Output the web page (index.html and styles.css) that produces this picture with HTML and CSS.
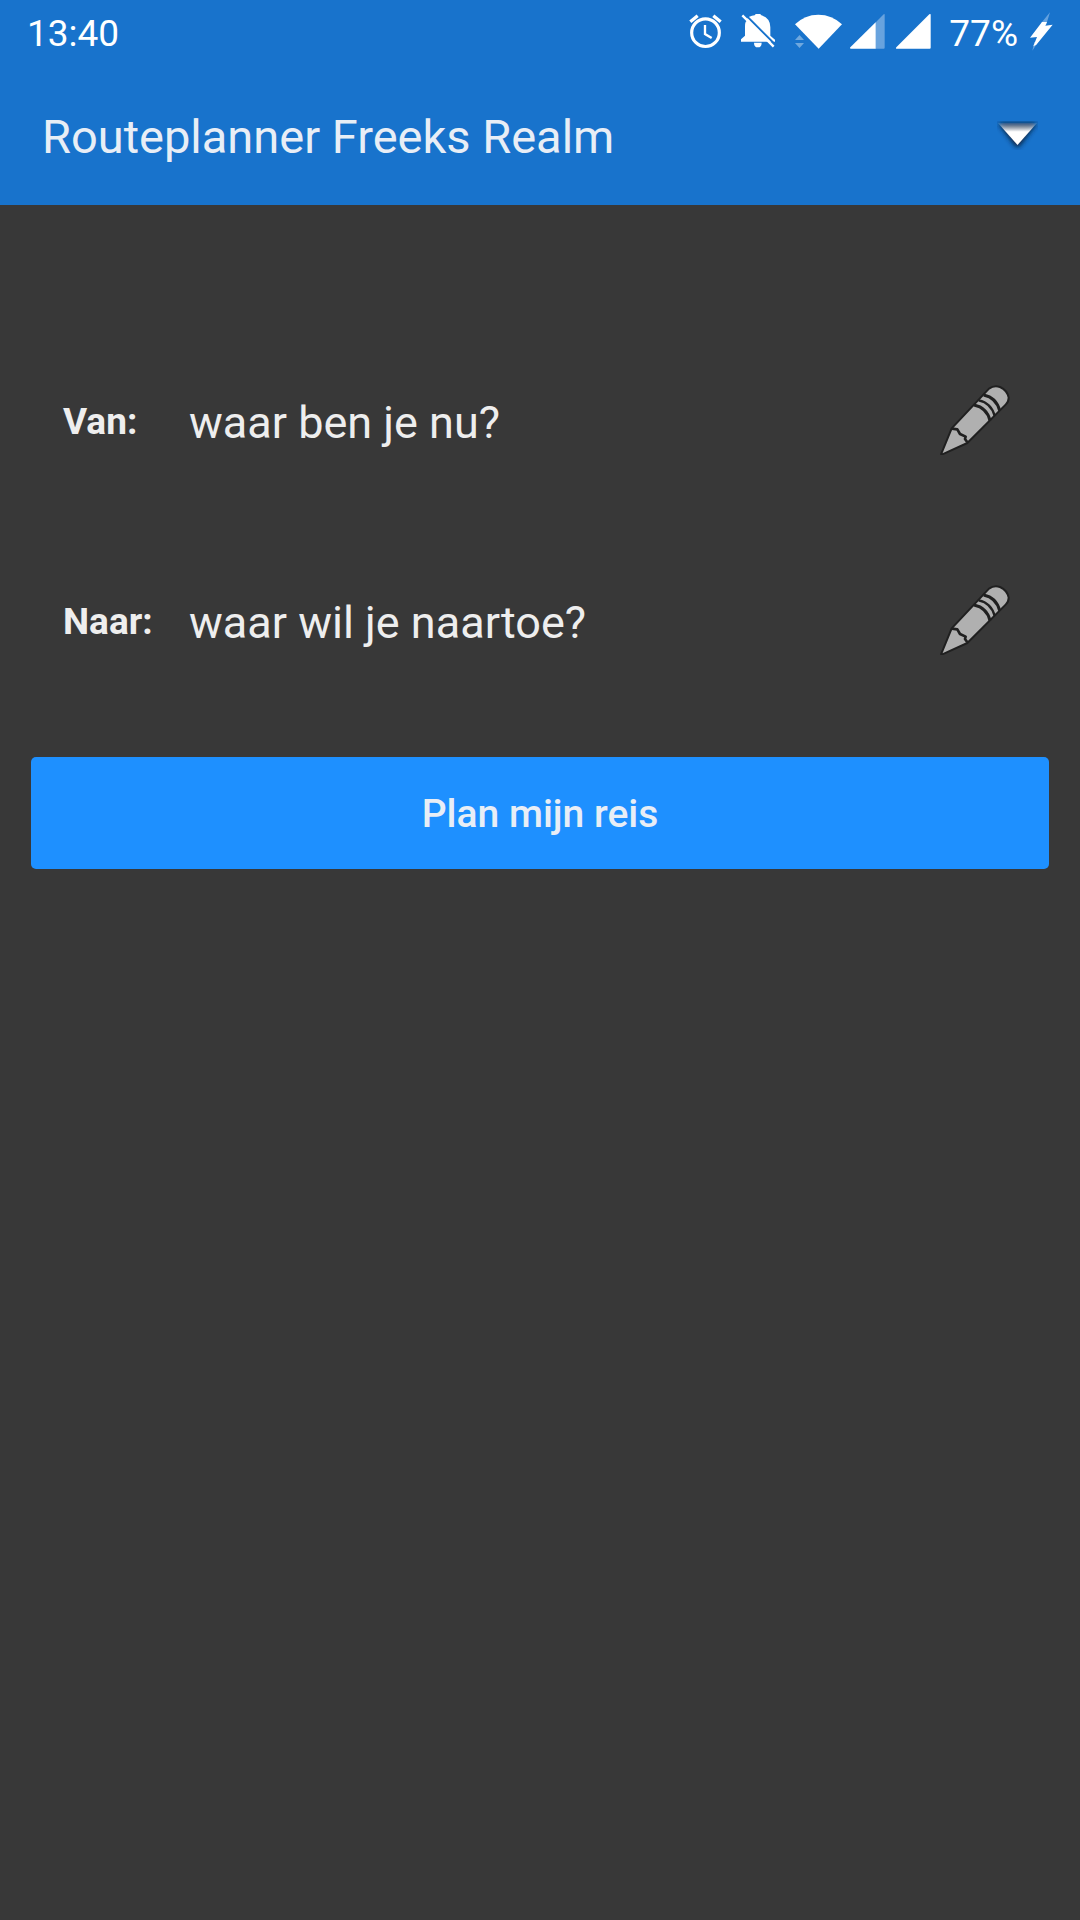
FILE: index.html
```html
<!DOCTYPE html>
<html lang="nl">
<head>
<meta charset="utf-8">
<meta name="viewport" content="width=device-width, initial-scale=1">
<title>Routeplanner Freeks Realm</title>
<link rel="stylesheet" href="styles.css">
</head>
<body>
<header class="top">
  <div class="status">
    <time class="clock">13:40</time>
    <div class="indicators">
      <svg width="33" height="35" viewBox="57 42 99 105" fill="none" stroke="#fff" aria-hidden="true">
        <circle cx="106.500" cy="98" r="41.500" stroke-width="9.500"/>
        <path d="M105 75V102L125 114" stroke-width="7"/>
        <path d="M61 65L83 47M130 47L152 65" stroke-width="10"/>
      </svg>
      <svg width="36" height="35" viewBox="210 42 108 105" aria-hidden="true">
        <path fill="#fff" d="M213 125V118L225 107V80Q225 60 236 51Q247 46 254 46Q256 41 264 41Q272 41 274 46Q301 54 301 82V107L315 119V125zM252 128H275Q275 142 263.500 142Q252 142 252 128z"/>
        <path d="M226 44L322 140" stroke="#1873cc" stroke-width="6"/>
        <path d="M215 54L228 67L232 50z" fill="#1873cc"/>
        <path d="M217 46L311 140" stroke="#fff" stroke-width="7"/>
      </svg>
      <div class="signals">
        <svg width="49" height="35" viewBox="372 42 147 105" aria-hidden="true">
          <path fill="#fff" d="M375 73Q404 44 445 44Q486 44 516 73L446 146z"/>
          <path fill="#6fa8de" d="M375 120L388.500 105L402 120zM375 129H402L388.500 144z"/>
        </svg>
        <svg width="35" height="35" viewBox="27 42 105 105" aria-hidden="true">
          <path fill="#68a3de" d="M103 68L128 43Q131 41 131 45V143Q131 146 128 146H103z"/>
          <path fill="#fff" d="M104 67V146H30Q25 146 28 142z"/>
        </svg>
        <svg width="39" height="35" viewBox="153 42 117 105" aria-hidden="true">
          <path fill="#fff" d="M265 43Q269 40 269 45V143Q269 146 266 146H168Q163 146 166 142z"/>
        </svg>
      </div>
      <div class="battery">
        <span class="percent">77%</span>
        <svg width="23" height="39" viewBox="570 36 69 117" aria-hidden="true">
          <path fill="#65a2df" d="M630 37L618 76L602 73L606 66zM577 152L583 126H594z"/>
          <path fill="#fff" d="M606 66H621L616 77L638 74L589 134L580 139L591 111L570 113z"/>
        </svg>
      </div>
    </div>
  </div>
  <div class="titlebar">
    <h1 class="title">Routeplanner Freeks Realm</h1>
    <button class="menu" type="button" aria-label="Menu">
      <svg width="41" height="29" viewBox="0 0 41 29" aria-hidden="true">
        <defs>
          <linearGradient id="shine" x1="0" y1="0" x2="0" y2="1">
            <stop offset="0" stop-color="#fff" stop-opacity=".1"/>
            <stop offset=".4" stop-color="#fff"/>
          </linearGradient>
          <filter id="shade" x="-20%" y="-20%" width="140%" height="150%">
            <feGaussianBlur stdDeviation="2.500"/>
          </filter>
        </defs>
        <path d="M1 2H40L22 26H19z" fill="#0a2340" filter="url(#shade)"/>
        <path d="M1 2H40L20.500 24z" fill="url(#shine)"/>
      </svg>
    </button>
  </div>
</header>

<main>
  <form class="planner">
    <div class="row">
      <label class="label" for="van">Van:</label>
      <input class="place" id="van" type="text" placeholder="waar ben je nu?">
      <button class="edit" type="button" aria-label="Van wijzigen">
        <svg width="70" height="70" viewBox="60 45 210 210" aria-hidden="true">
          <g id="pencil" stroke="#202020" stroke-linejoin="round">
            <path fill="#b0b0b0" stroke-width="6" d="M64 251L95 175L188 76L207 56Q223 44 240 51Q262 61 266 83Q266 95 257 104L142 219L67 253Q62 254 64 251z"/>
            <g fill="none" stroke-width="9">
              <path d="M162 105Q201 113 210 152"/>
              <path d="M176 91Q214 99 224 138" stroke-width="7"/>
              <path d="M191 75Q229 83 239 122"/>
              <path d="M96 176L112 178L120 192L137 200L135 207L142 217" stroke-width="8"/>
            </g>
          </g>
        </svg>
      </button>
    </div>
    <div class="row">
      <label class="label" for="naar">Naar:</label>
      <input class="place" id="naar" type="text" placeholder="waar wil je naartoe?">
      <button class="edit" type="button" aria-label="Naar wijzigen">
        <svg width="70" height="70" viewBox="60 45 210 210" aria-hidden="true"><use href="#pencil"/></svg>
      </button>
    </div>
    <button class="submit" type="submit">Plan mijn reis</button>
  </form>
</main>
</body>
</html>
```
FILE: styles.css
```css
* {
  box-sizing: border-box;
}

body {
  margin: 0;
  min-height: 100vh;
  background: #383838;
  color: #eee;
  font-family: Roboto, "Liberation Sans", sans-serif;
}

button,
input {
  margin: 0;
  padding: 0;
  border: 0;
  background: none;
  color: inherit;
  font-family: inherit;
}

svg {
  display: block;
  flex: none;
}

.top {
  background: #1873cc;
}

.status {
  display: flex;
  align-items: center;
  justify-content: space-between;
  height: 66px;
  padding: 0 27px 3px;
  color: #fff;
  font-size: 37px;
  line-height: 44px;
}

.clock,
.percent {
  padding-top: 4px;
}

.indicators {
  display: flex;
  align-items: center;
  gap: 18px;
}

.signals {
  display: flex;
  gap: 7px;
}

.battery {
  display: flex;
  align-items: center;
  gap: 12px;
}

.titlebar {
  display: flex;
  align-items: center;
  justify-content: space-between;
  height: 139px;
  padding: 0 42px;
}

.title {
  margin: 0;
  padding-top: 2px;
  font-size: 47px;
  font-weight: 400;
  line-height: 56px;
  color: #e8eef6;
}

.planner {
  display: flex;
  flex-direction: column;
  padding: 115px 31px;
}

.row {
  display: flex;
  align-items: center;
  height: 200px;
  padding: 0 39px 0 32px;
}

.label {
  flex: none;
  width: 126px;
  padding-top: 4px;
  font-size: 37px;
  font-weight: 700;
  line-height: 44px;
}

.place {
  flex: 1;
  min-width: 0;
  height: 64px;
  padding-top: 4px;
  font-size: 45px;
  line-height: 60px;
}

.place::placeholder {
  color: #eee;
  opacity: 1;
}

.submit {
  height: 112px;
  margin-top: 37px;
  padding-top: 2px;
  border-radius: 5px;
  background: #1e90ff;
  color: #e8eef6;
  font-size: 39px;
  font-weight: 500;
}
```
